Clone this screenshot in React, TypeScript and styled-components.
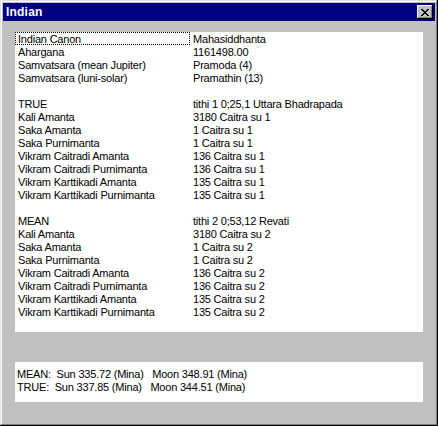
import styled, { createGlobalStyle } from 'styled-components';

const GlobalStyle = createGlobalStyle`
  body {
    margin: 0;
    background: #ffffff;
    font-family: "Liberation Sans", Arial, sans-serif;
  }
`;

const StyledWindow = styled.div`
  width: 438px;
  height: 426px;
  box-sizing: border-box;
  padding: 3px;
  background: #c0c0c0;
  box-shadow: inset -1px -1px #000000, inset 1px 1px #dfdfdf,
    inset -2px -2px #808080, inset 2px 2px #ffffff;
  display: flex;
  flex-direction: column;
`;

const StyledTitleBar = styled.div`
  height: 18px;
  background: #000080;
  display: flex;
  align-items: center;
  justify-content: space-between;
  padding: 0 2px 0 3px;
`;

const StyledTitle = styled.span`
  color: #ffffff;
  font-weight: 700;
  font-size: 12px;
  letter-spacing: 0.2px;
`;

const StyledClose = styled.div`
  width: 16px;
  height: 14px;
  box-sizing: border-box;
  background: #c0c0c0;
  box-shadow: inset -1px -1px #000000, inset 1px 1px #ffffff,
    inset -2px -2px #808080;
  display: flex;
  align-items: center;
  justify-content: center;
`;

const StyledBody = styled.div`
  flex: 1;
  padding: 11px 12px 0;
  display: flex;
  flex-direction: column;
  gap: 30px;
`;

const StyledList = styled.div`
  height: 300px;
  background: #ffffff;
`;

const StyledRow = styled.div`
  display: grid;
  grid-template-columns: 175px 1fr;
  height: 13px;
  font-size: 11px;
  letter-spacing: -0.2px;
  color: #000000;
  white-space: nowrap;
`;

const StyledCell = styled.div<{ $focused?: boolean }>`
  box-sizing: border-box;
  padding: 1px 0 0 2px;
  height: 13px;
  border: 1px dotted ${({ $focused }) => ($focused ? '#000000' : 'transparent')};
  line-height: 11px;
`;

const StyledInfo = styled.div`
  height: 40px;
  box-sizing: border-box;
  background: #ffffff;
  padding: 6px 0 0 2px;
  font-size: 11px;
  line-height: 13px;
  letter-spacing: -0.2px;
  white-space: pre;
`;

type Line = [string, string];

const rows: Line[] = [
  ['Indian Canon', 'Mahasiddhanta'],
  ['Ahargana', '1161498.00'],
  ['Samvatsara (mean Jupiter)', 'Pramoda (4)'],
  ['Samvatsara (luni-solar)', 'Pramathin (13)'],
  ['', ''],
  ['TRUE', 'tithi 1 0;25,1 Uttara Bhadrapada'],
  ['Kali Amanta', '3180 Caitra su 1'],
  ['Saka Amanta', '1 Caitra su 1'],
  ['Saka Purnimanta', '1 Caitra su 1'],
  ['Vikram Caitradi Amanta', '136 Caitra su 1'],
  ['Vikram Caitradi Purnimanta', '136 Caitra su 1'],
  ['Vikram Karttikadi Amanta', '135 Caitra su 1'],
  ['Vikram Karttikadi Purnimanta', '135 Caitra su 1'],
  ['', ''],
  ['MEAN', 'tithi 2 0;53,12 Revati'],
  ['Kali Amanta', '3180 Caitra su 2'],
  ['Saka Amanta', '1 Caitra su 2'],
  ['Saka Purnimanta', '1 Caitra su 2'],
  ['Vikram Caitradi Amanta', '136 Caitra su 2'],
  ['Vikram Caitradi Purnimanta', '136 Caitra su 2'],
  ['Vikram Karttikadi Amanta', '135 Caitra su 2'],
  ['Vikram Karttikadi Purnimanta', '135 Caitra su 2'],
];

export default function App() {
  return (
    <>
      <GlobalStyle />
      <StyledWindow>
        <StyledTitleBar>
          <StyledTitle>Indian</StyledTitle>
          <StyledClose>
            <svg width="8" height="7" viewBox="0 0 8 7">
              <path d="M0 0h2v1h1v1h2V1h1V0h2v1H7v1H6v1H5v1h1v1h1v1h1v1H6V6H5V5H3v1H2v1H0V6h1V5h1V4h1V3H2V2H1V1H0z" fill="#000" />
            </svg>
          </StyledClose>
        </StyledTitleBar>

        <StyledBody>
          <StyledList>
            {rows.map(([label, value], i) => (
              <StyledRow key={i}>
                <StyledCell $focused={i === 0}>{label}</StyledCell>
                <StyledCell>{value}</StyledCell>
              </StyledRow>
            ))}
          </StyledList>

          <StyledInfo>
            {'MEAN:  Sun 335.72 (Mina)   Moon 348.91 (Mina)\nTRUE:  Sun 337.85 (Mina)   Moon 344.51 (Mina)'}
          </StyledInfo>
        </StyledBody>
      </StyledWindow>
    </>
  );
}
